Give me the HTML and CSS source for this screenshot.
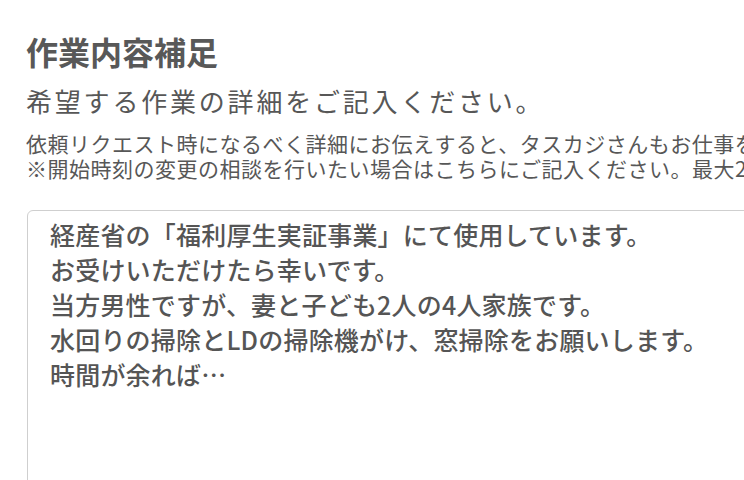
FILE: index.html
```html
<!DOCTYPE html>
<html lang="ja">
<head>
<meta charset="utf-8">
<title>作業内容補足</title>
<link rel="stylesheet" href="styles.css">
</head>
<body>
<section class="section">
  <h2 class="title">作業内容補足</h2>
  <p class="lead">希望する作業の詳細をご記入ください。</p>
  <p class="note">依頼リクエスト時になるべく詳細にお伝えすると、タスカジさんもお仕事をイメージしやすくなります。</p>
  <p class="note">※開始時刻の変更の相談を行いたい場合はこちらにご記入ください。最大2時間まで</p>
  <textarea class="field" readonly>経産省の「福利厚生実証事業」にて使用しています。
お受けいただけたら幸いです。
当方男性ですが、妻と子ども2人の4人家族です。
水回りの掃除とLDの掃除機がけ、窓掃除をお願いします。
時間が余れば…</textarea>
</section>
</body>
</html>
```
FILE: styles.css
```css
html, body {
  margin: 0;
  padding: 0;
  overflow: hidden;
  background: #ffffff;
}
body {
  font-family: "Noto Sans CJK JP", "Noto Sans", sans-serif;
  color: #575757;
}
.section {
  padding: 30px 0 0 26px;
  width: 900px;
}
.title {
  margin: 0;
  font-size: 32px;
  line-height: 42px;
  font-weight: 700;
  letter-spacing: 0;
  color: #585858;
}
.lead {
  margin: 12px 0 0;
  font-size: 26px;
  line-height: 34px;
  letter-spacing: 2.8px;
  font-weight: 400;
  white-space: nowrap;
}
.note {
  margin: 0;
  font-size: 21px;
  line-height: 25px;
  letter-spacing: 0.5px;
  white-space: nowrap;
}
.lead + .note {
  margin-top: 13px;
}
.field {
  display: block;
  box-sizing: border-box;
  margin: 29px 0 0 1px;
  width: 820px;
  height: 320px;
  padding: 6px 22px;
  border: 1px solid #cfcfcf;
  border-radius: 6px;
  font-family: "Noto Sans CJK JP", "Noto Sans", sans-serif;
  font-size: 25px;
  line-height: 35px;
  letter-spacing: 0.2px;
  font-weight: 500;
  color: #555555;
  background: #ffffff;
  resize: none;
  outline: none;
  overflow: hidden;
  white-space: pre;
}
```
